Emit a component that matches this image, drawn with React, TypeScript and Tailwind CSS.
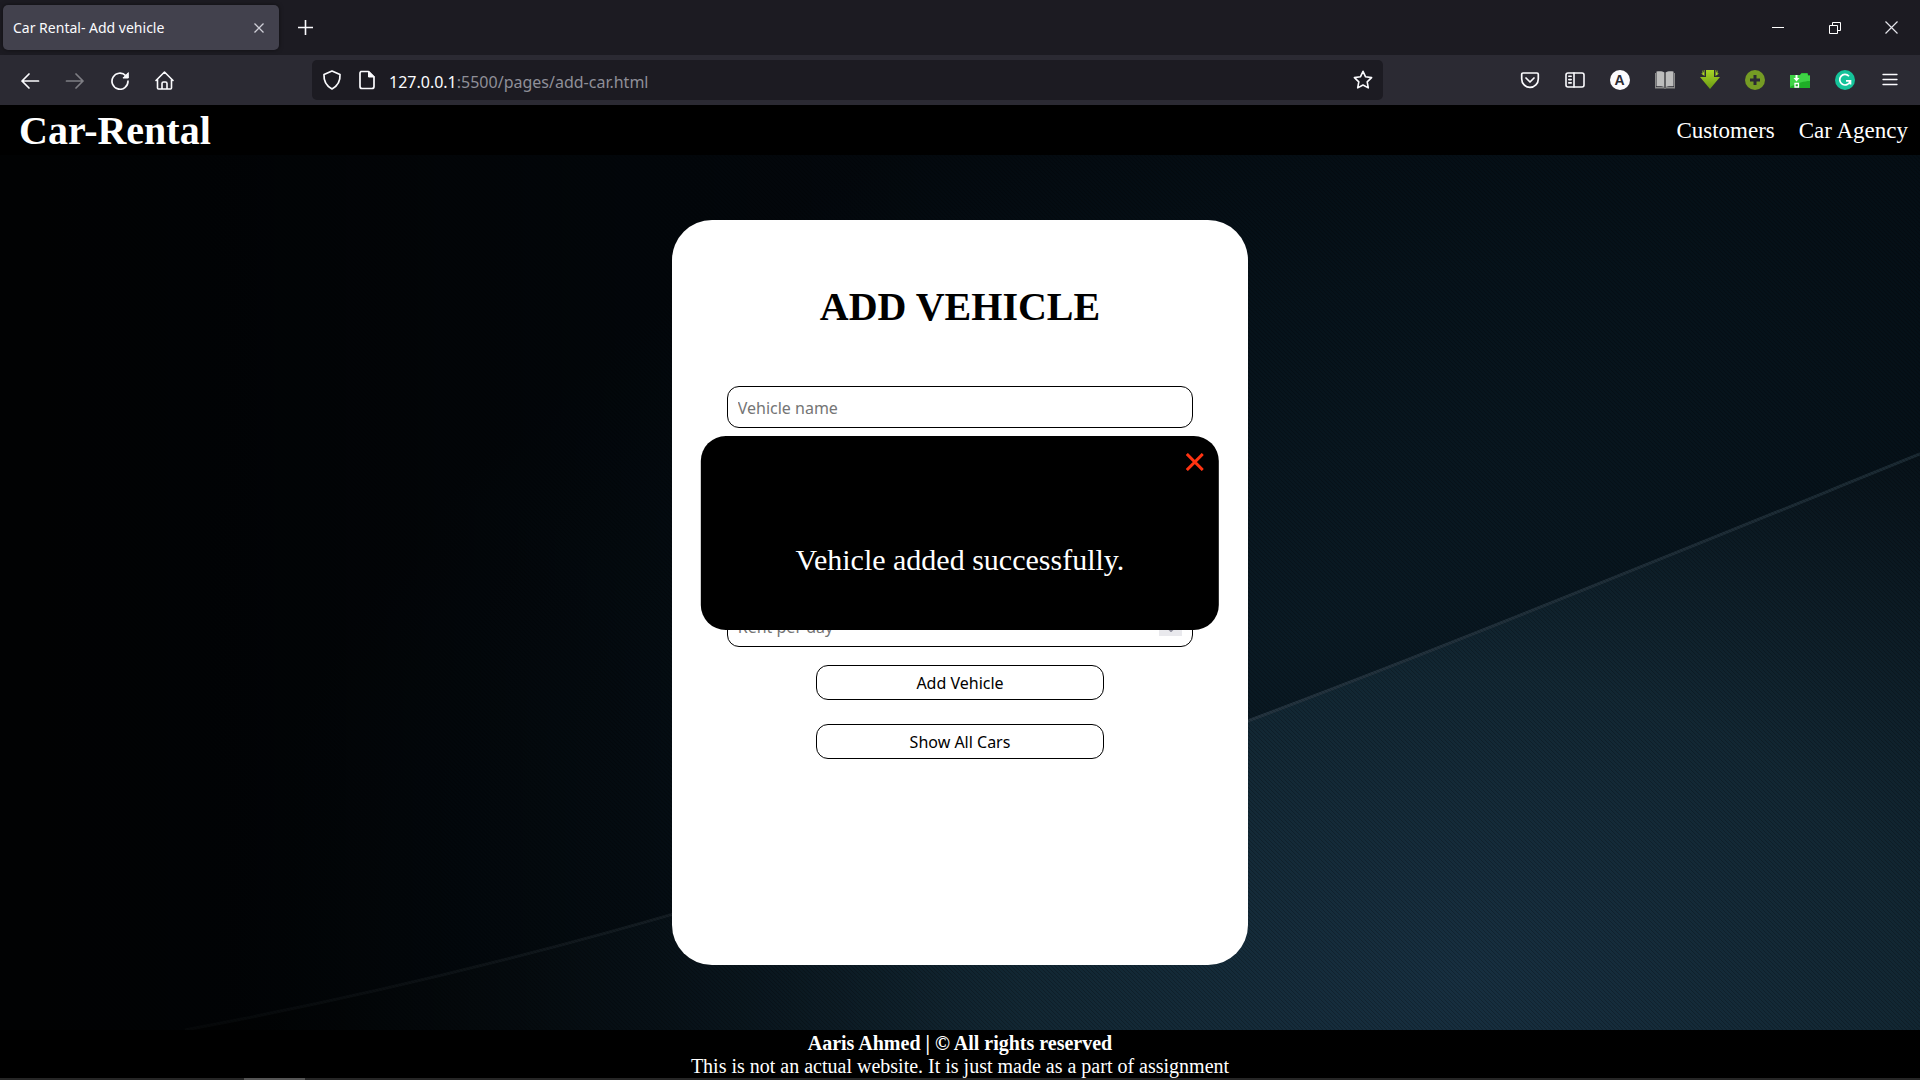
import React from "react";

function IconButton({ label, children, className = "" }: { label: string; children: React.ReactNode; className?: string }) {
  return (
    <button type="button" aria-label={label} className={`flex h-10 w-[45px] shrink-0 items-center justify-center text-[#fbfbfe] ${className}`}>
      {children}
    </button>
  );
}

function Stroke({ children, size = 20, width = 1.7 }: { children: React.ReactNode; size?: number; width?: number }) {
  return (
    <svg width={size} height={size} viewBox={`0 0 ${size} ${size}`} fill="none" stroke="currentColor" strokeWidth={width} strokeLinecap="round" strokeLinejoin="round" aria-hidden="true">
      {children}
    </svg>
  );
}

function TabStrip() {
  return (
    <div className="flex h-[55px] items-center bg-[#1c1b22] pl-[3px]">
      <div className="flex h-[45px] w-[276px] items-center justify-between rounded-[5px] bg-[#42414d] pl-[10px] pr-[15px] shadow-[0_0_4px_rgba(0,0,0,0.5)]">
        <span className="pt-px text-[14px] leading-5 text-[#fbfbfe]">Car Rental- Add vehicle</span>
        <button type="button" aria-label="Close tab" className="text-[#cfcfd8]">
          <svg width="10" height="10" viewBox="0 0 10 10" fill="none" stroke="currentColor" strokeWidth="1.3" aria-hidden="true">
            <path d="M.5.5l9 9M9.5.5l-9 9" />
          </svg>
        </button>
      </div>
      <button type="button" aria-label="New tab" className="ml-[19px] text-[#fbfbfe]">
        <svg width="15" height="15" viewBox="0 0 15 15" fill="none" stroke="currentColor" strokeWidth="1.6" aria-hidden="true">
          <path d="M7.5 0v15M0 7.5h15" />
        </svg>
      </button>
      <div className="ml-auto flex self-stretch text-white">
        <button type="button" aria-label="Minimize" className="flex w-[57px] items-center justify-center">
          <svg width="12" height="12" viewBox="0 0 12 12" aria-hidden="true"><path d="M0 5h12v1H0z" fill="currentColor" /></svg>
        </button>
        <button type="button" aria-label="Restore" className="flex w-[57px] items-center justify-center">
          <svg width="12" height="12" viewBox="0 0 12 12" fill="none" stroke="currentColor" aria-hidden="true"><path d="M.5 3.5h8v8h-8zM3.5 3.5v-3h8v8h-3" /></svg>
        </button>
        <button type="button" aria-label="Close window" className="flex w-[57px] items-center justify-center">
          <svg width="13" height="13" viewBox="0 0 13 13" fill="none" stroke="#e4e4ea" strokeWidth="1.2" aria-hidden="true"><path d="M.5.5l12 12M12.5.5l-12 12" /></svg>
        </button>
      </div>
    </div>
  );
}

function Toolbar() {
  return (
    <div className="flex h-[50px] items-center bg-[#2b2a33] pl-[7px] pr-2">
      <IconButton label="Back"><Stroke><path d="M18.500 11H2M9 4L2 11l7 7" /></Stroke></IconButton>
      <IconButton label="Forward" className="opacity-40"><Stroke><path d="M1.500 11H18M11 4l7 7-7 7" /></Stroke></IconButton>
      <IconButton label="Reload">
        <Stroke><path d="M15.700 5.600A8 8 0 1 0 18 11.200" /><path d="M18.300 3v5h-5z" fill="currentColor" strokeWidth="1" /></Stroke>
      </IconButton>
      <IconButton label="Home">
        <Stroke width={1.6}><path d="M1 10.500L9.500 2 18 10.500M2.500 9.500v8.500a1 1 0 0 0 1 1h12a1 1 0 0 0 1-1V9.500M7 18.500v-5a1.500 1.500 0 0 1 1.500-1.500h2a1.500 1.500 0 0 1 1.500 1.500v5" /></Stroke>
      </IconButton>
      <div className="ml-[125px] mr-[124px] flex h-10 flex-1 items-center rounded-[5px] bg-[#1c1b22] pl-[10px] pr-[10px] text-[#fbfbfe]">
        <Stroke><path d="M10 1l8 3.500c.4 6.500-2.500 11.500-8 14.500C4.500 16 1.600 11 2 4.500z" /></Stroke>
        <span className="ml-[15px]">
          <Stroke>
            <path d="M4 1.500h7.500L17 7v9.500a2 2 0 0 1-2 2H5a2 2 0 0 1-2-2v-13a2 2 0 0 1 1-2z" />
            <path d="M11.500 1.500V7H17z" fill="currentColor" strokeWidth="1" />
          </Stroke>
        </span>
        <span className="ml-3 flex-1 pt-[3px] text-[16px] leading-6 text-[#8f8f98]">
          <span className="text-[#fbfbfe]">127.0.0.1</span>:5500/pages/add-car.html
        </span>
        <button type="button" aria-label="Bookmark this page">
          <Stroke width={1.6}><path d="M10 1.300l2.600 5.500 6 .8-4.400 4.200 1.100 6.100L10 15l-5.300 2.900 1.100-6.100L1.400 7.600l6-.8z" /></Stroke>
        </button>
      </div>
      <IconButton label="Save to Pocket">
        <Stroke><path d="M3 3h14A1.300 1.300 0 0 1 18.300 4.300V9a8.300 8.300 0 0 1-16.600 0V4.300A1.300 1.300 0 0 1 3 3zM6 8l4 4 4-4" /></Stroke>
      </IconButton>
      <IconButton label="Sidebars">
        <Stroke width={1.6}><rect x="1" y="3" width="18" height="14" rx="2" /><path d="M9 3v14M3.800 6.300h2.400M3.800 9.600h2.400M3.800 12.900h2.400" /></Stroke>
      </IconButton>
      <IconButton label="Account">
        <span className="flex size-5 items-center justify-center rounded-full bg-[#fbfbfe] font-['Liberation_Sans',sans-serif] text-[14px] font-bold leading-5 text-[#2b2a33]">A</span>
      </IconButton>
      <IconButton label="Reader">
        <svg width="20" height="20" viewBox="0 0 20 20" aria-hidden="true">
          <path d="M0 3h1v14h8l1 1 1-1h8V3h1v15.500h-9l-1 .5-1-.5H0z" fill="#8a8a8a" />
          <path d="M1.500 1.500C5 1 8 1.300 9.400 2.600v14.600C7.500 16 5 16 1.500 16.300zM18.500 1.500C15 1 12 1.300 10.600 2.600v14.600c1.900-1.200 4.400-1.200 7.900-.9z" fill="#bdbdbd" />
          <path d="M9.500 2.500h1V18h-1z" fill="#5c5c5c" />
        </svg>
      </IconButton>
      <IconButton label="Downloader">
        <svg width="20" height="20" viewBox="0 0 20 20" aria-hidden="true">
          <defs><linearGradient id="dl" x1="0" y1="0" x2="0" y2="1"><stop offset="0" stopColor="#a9d526" /><stop offset="1" stopColor="#6a9a14" /></linearGradient></defs>
          <path d="M6 0h8v7h6l-10 12L0 7h6z" fill="url(#dl)" />
          <path d="M2.500 0v3.500H1l3.500 2.500V0H3.800v3zM17.500 0v3.500H19L15.500 6V0h.7v3z" fill="#a9d526" />
        </svg>
      </IconButton>
      <IconButton label="Add">
        <svg width="20" height="20" viewBox="0 0 20 20" aria-hidden="true"><circle cx="10" cy="10" r="10" fill="#759b24" /><path d="M8.500 5h3v3.500H15v3h-3.500V15h-3v-3.500H5v-3h3.500z" fill="#2b2a33" /></svg>
      </IconButton>
      <IconButton label="Download folder">
        <svg width="20" height="20" viewBox="0 0 20 20" aria-hidden="true">
          <path d="M0 5h10l1.500-2h6l.5 2h2v13H0z" fill="#1fae27" />
          <path d="M0 5h10l1.500-1.500h6L18 6h2v5C14 11 8 13 0 17z" fill="#3fd346" />
          <path d="M5.500 5h2v3h2l-3 3.500-3-3.500h2z" fill="#fff" />
          <path d="M5 13.500h3.500V17H5z" fill="none" stroke="#fff" strokeWidth="1.300" />
        </svg>
      </IconButton>
      <IconButton label="Grammar checker">
        <svg width="20" height="20" viewBox="0 0 20 20" fill="none" aria-hidden="true">
          <circle cx="10" cy="10" r="10" fill="#15c39a" />
          <path d="M14 6.200A5.300 5.300 0 1 0 15 11.500M11 10.800h4.500v3.700" stroke="#fff" strokeWidth="1.700" />
        </svg>
      </IconButton>
      <IconButton label="Menu">
        <svg width="16" height="14" viewBox="0 0 16 14" aria-hidden="true"><path d="M1 1.500h14M1 6.500h14M1 11.500h14" stroke="currentColor" strokeWidth="1.300" strokeLinecap="round" /></svg>
      </IconButton>
    </div>
  );
}

function Backdrop() {
  return (
    <svg className="absolute inset-0 h-full w-full" viewBox="0 0 1920 875" preserveAspectRatio="none" aria-hidden="true">
      <defs>
        <radialGradient id="upper" gradientUnits="userSpaceOnUse" cx="0" cy="0" r="1" gradientTransform="translate(1300 480) rotate(-25) scale(1150 620)">
          <stop offset="0" stopColor="#0a1a24" /><stop offset="0.5" stopColor="#06121a" /><stop offset="1" stopColor="#03080d" />
        </radialGradient>
        <radialGradient id="lower" gradientUnits="userSpaceOnUse" cx="0" cy="0" r="1" gradientTransform="translate(1460 820) scale(1250 850)">
          <stop offset="0" stopColor="#172f40" /><stop offset="0.35" stopColor="#122733" /><stop offset="0.65" stopColor="#09151d" /><stop offset="1" stopColor="#020507" />
        </radialGradient>
        <linearGradient id="streak" x1="0" x2="1" y1="0" y2="0">
          <stop offset="0" stopColor="#232b30" stopOpacity="0.400" /><stop offset="0.6" stopColor="#243440" /><stop offset="1" stopColor="#1b2a33" />
        </linearGradient>
        <linearGradient id="shade" x1="0" x2="1" y1="0" y2="0">
          <stop offset="0" stopColor="#000" stopOpacity="0.800" /><stop offset="0.300" stopColor="#000" stopOpacity="0.300" /><stop offset="0.500" stopColor="#000" stopOpacity="0" />
        </linearGradient>
        <pattern id="weave" width="4" height="4" patternUnits="userSpaceOnUse">
          <path d="M-1 -1l6 6M-1 3l2 2M3 -1l2 2" stroke="#000" strokeOpacity="0.240" strokeWidth="1" />
        </pattern>
      </defs>
      <rect width="1920" height="875" fill="url(#upper)" />
      <path d="M185 875C800 760 1300 550 1920 299V875z" fill="url(#lower)" />
      <path d="M185 875C800 760 1300 550 1920 299" fill="none" stroke="url(#streak)" strokeWidth="3" />
      <rect width="1920" height="875" fill="url(#shade)" />
      <rect width="1920" height="875" fill="url(#weave)" />
    </svg>
  );
}

const fieldClass = "block h-[42px] w-full rounded-xl border border-black bg-white px-[10px] pt-[2px] text-[16px] text-black placeholder:text-[#757575] outline-none";
const actionClass = "block w-1/2 rounded-xl border border-black bg-white pt-px text-[16px] leading-8 text-black";

function VehicleCard() {
  return (
    <section className="relative flex w-[30%] min-w-[400px] flex-col rounded-[40px] bg-white pt-16">
      <h1 className="text-center text-[40px] font-bold leading-[46px] text-black">ADD VEHICLE</h1>
      <form className='mt-14 flex flex-col items-center font-["Noto_Sans",sans-serif]' onSubmit={(e) => e.preventDefault()}>
        <div className="flex w-[81%] flex-col gap-[31px]">
          <input type="text" aria-label="Vehicle name" placeholder="Vehicle name" className={fieldClass} />
          <input type="text" aria-label="Vehicle model" className={fieldClass} />
          <input type="number" aria-label="Seating capacity" className={fieldClass} />
          <div className="relative">
            <input type="number" aria-label="Rent per day" placeholder="Rent per day" className={fieldClass} />
            <span className="absolute right-[11px] top-[10px] flex h-[21px] w-[23px] items-end justify-center bg-[#e9e9ed] pb-1">
              <svg width="8" height="5" viewBox="0 0 8 5" fill="none" stroke="#8f8f9d" strokeWidth="2" aria-hidden="true"><path d="M1 1l3 3 3-3" /></svg>
            </span>
          </div>
        </div>
        <button type="submit" className={`mt-[18px] ${actionClass}`}>Add Vehicle</button>
        <button type="button" className={`mt-6 ${actionClass}`}>Show All Cars</button>
      </form>
      <div role="alertdialog" aria-label="Vehicle added successfully." className="absolute left-1/2 top-[216px] flex w-[90%] -translate-x-1/2 flex-col rounded-[25px] bg-black px-[15px] pb-[53px] pt-[17px] text-white">
        <button type="button" aria-label="Close message" className="self-end text-[#ff3311]">
          <svg width="18" height="18" viewBox="0 0 18 18" fill="none" stroke="currentColor" strokeWidth="3" aria-hidden="true"><path d="M1 1l16 16M17 1L1 17" /></svg>
        </button>
        <p className="mt-[71px] text-center text-[30px] leading-[35px]">Vehicle added successfully.</p>
      </div>
    </section>
  );
}

export default function App() {
  return (
    <div className='flex min-h-screen flex-col bg-black font-["Liberation_Serif",serif]'>
      <div className='font-["Noto_Sans",sans-serif]'>
        <TabStrip />
        <Toolbar />
      </div>
      <header className="flex h-[50px] items-center justify-between bg-black pl-[19px] pr-3 pt-[2px] text-white">
        <span className="text-[40px] font-bold leading-[46px]">Car-Rental</span>
        <nav className="flex gap-6 text-[23px] leading-[26px]">
          <a href="#customers">Customers</a>
          <a href="#agency">Car Agency</a>
        </nav>
      </header>
      <main className="relative flex flex-1 justify-center py-[65px]">
        <Backdrop />
        <VehicleCard />
      </main>
      <footer className="bg-black pt-[2px] text-center text-[20px] leading-[23px] text-white">
        <p className="font-bold">Aaris Ahmed | © All rights reserved</p>
        <p>This is not an actual website. It is just made as a part of assignment</p>
      </footer>
      <div className="h-[2px] bg-[#262626] pl-[244px]">
        <div className="h-[2px] w-[61px] bg-[#555]" />
      </div>
    </div>
  );
}
